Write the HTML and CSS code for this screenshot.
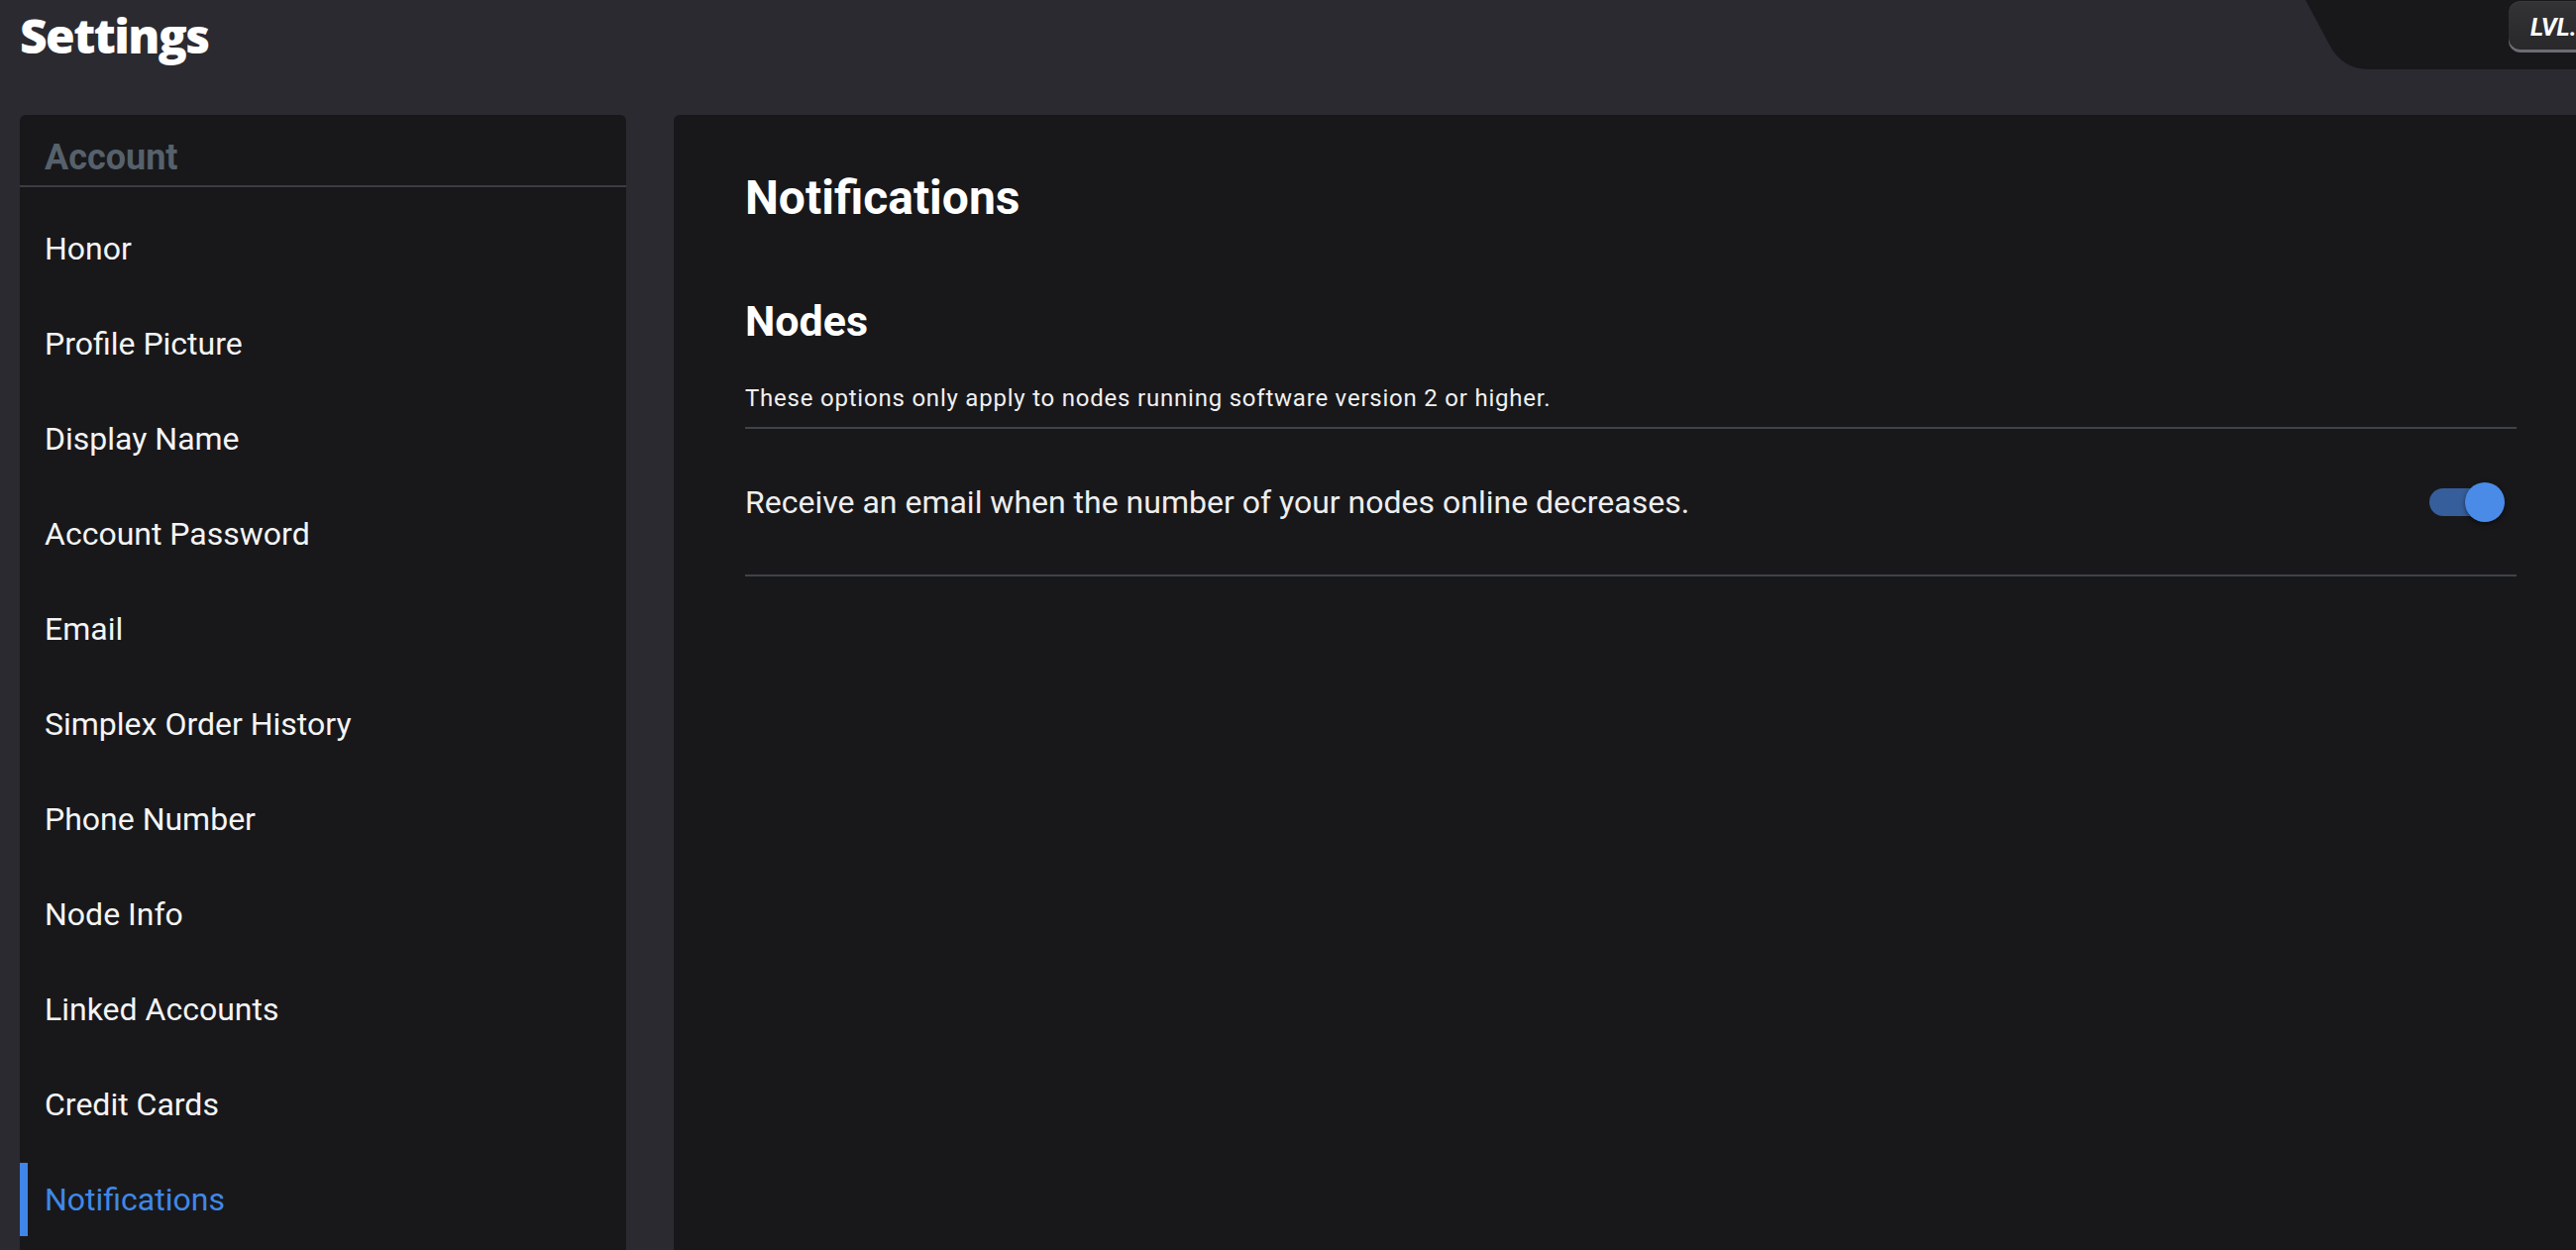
FILE: index.html
```html
<!DOCTYPE html>
<html lang="en">

<head>
    <meta charset="UTF-8">
    <meta name="viewport" content="width=device-width, initial-scale=1.0">
    <title>Settings</title>

    <link rel="stylesheet" href="styles.css">
</head>

<body>
    <header class="top">
        <h1 class="title">Settings</h1>
        <div class="topbar">
            <svg class="topbar-shape" viewBox="0 0 273 70" preserveAspectRatio="none">
                <path d="M0 0 L24 45 Q37 70 64 70 L273 70 L273 0 Z" fill="#18181b" />
            </svg>
            <button class="lvl">LVL.</button>
        </div>
    </header>

    <div class="content">
        <nav class="side">
            <h2 class="side-head">Account</h2>
            <ul class="side-list">
                <li class="side-item">Honor</li>
                <li class="side-item">Profile Picture</li>
                <li class="side-item">Display Name</li>
                <li class="side-item">Account Password</li>
                <li class="side-item">Email</li>
                <li class="side-item">Simplex Order History</li>
                <li class="side-item">Phone Number</li>
                <li class="side-item">Node Info</li>
                <li class="side-item">Linked Accounts</li>
                <li class="side-item">Credit Cards</li>
                <li class="side-item active">Notifications</li>
            </ul>
        </nav>

        <main class="panel">
            <h1 class="panel-title">Notifications</h1>
            <h2 class="panel-sub">Nodes</h2>
            <p class="panel-note">These options only apply to nodes running software version 2 or higher.</p>

            <div class="setting-row">
                <span class="setting-text">Receive an email when the number of your nodes online decreases.</span>
                <label class="switch">
                    <input type="checkbox" checked>
                    <span class="track"></span>
                    <span class="knob"></span>
                </label>
            </div>
        </main>
    </div>
</body>

</html>
```

FILE: styles.css
```css
* {
    box-sizing: border-box;
    margin: 0;
    padding: 0;
}

html,
body {
    overflow: hidden;
}

body {
    background: #2b2a30;
    color: #f2f2f2;
    font-family: Roboto, "Noto Sans", sans-serif;
    width: 2600px;
    height: 100vh;
}

/* top bar */
.top {
    display: flex;
    justify-content: space-between;
    align-items: flex-start;
    height: 116px;
}

.title {
    font-family: "Open Sans", "Noto Sans", sans-serif;
    font-weight: 800;
    font-size: 48px;
    line-height: 48px;
    color: #ffffff;
    padding: 12px 0 0 20px;
    letter-spacing: -1.6px;
}

.topbar {
    position: relative;
    display: flex;
    width: 273px;
    height: 70px;
    flex-shrink: 0;
}

.topbar-shape {
    position: absolute;
    top: 0;
    left: 0;
    width: 100%;
    height: 100%;
}

.lvl {
    position: relative;
    appearance: none;
    border: none;
    outline: none;
    margin: 1px 0 0 205px;
    width: 110px;
    height: 52px;
    flex-shrink: 0;
    padding: 0 0 0 22px;
    text-align: left;
    border-radius: 12px;
    background: linear-gradient(#333336, #28282b);
    box-shadow: inset 0 -3px 0 #6c6c74, inset 0 1px 0 #3a3a3e;
    color: #ffffff;
    font-family: Roboto, sans-serif;
    font-style: italic;
    font-weight: 700;
    font-size: 25px;
}

/* layout */
.content {
    display: flex;
    gap: 48px;
    padding: 0 20px;
    height: 1200px;
}

/* sidebar */
.side {
    width: 612px;
    flex-shrink: 0;
    background: #18181b;
    border-radius: 6px;
}

.side-head {
    font-size: 36px;
    line-height: 36px;
    font-weight: 700;
    color: #56616b;
    padding: 25px 25px 10px;
    border-bottom: 2px solid #3a3d44;
}

.side-list {
    list-style: none;
    display: flex;
    flex-direction: column;
    gap: 22px;
    padding-top: 25px;
}

.side-item {
    display: flex;
    align-items: center;
    height: 74px;
    padding-left: 25px;
    font-size: 32px;
    color: #f4f4f4;
    cursor: pointer;
}

.side-item.active {
    color: #4088e6;
    border-left: 8px solid #3f86e8;
    padding-left: 17px;
}

/* main panel */
.panel {
    width: 1932px;
    flex-shrink: 0;
    background: #18181b;
    border-radius: 6px;
    padding: 60px 72px 0;
}

.panel-title {
    font-size: 48px;
    line-height: 48px;
    font-weight: 700;
    color: #ffffff;
}

.panel-sub {
    font-size: 43px;
    line-height: 43px;
    font-weight: 700;
    color: #ffffff;
    margin-top: 79px;
}

.panel-note {
    font-size: 24px;
    line-height: 24px;
    color: #f0f0f0;
    letter-spacing: 0.78px;
    margin-top: 44px;
    padding-bottom: 17px;
    border-bottom: 2px solid #3e4349;
}

.setting-row {
    display: flex;
    justify-content: space-between;
    align-items: center;
    height: 149px;
    border-bottom: 2px solid #3e4349;
}

.setting-text {
    font-size: 32px;
    color: #eeeeee;
}

.switch {
    position: relative;
    width: 76px;
    height: 40px;
    margin-right: 12px;
    cursor: pointer;
}

.switch input {
    display: none;
}

.switch .track {
    position: absolute;
    left: 0;
    top: 6px;
    width: 64px;
    height: 28px;
    border-radius: 14px;
    background: #365e9b;
}

.switch .knob {
    position: absolute;
    right: 0;
    top: 0;
    width: 40px;
    height: 40px;
    border-radius: 50%;
    background: #4a8be8;
    box-shadow: 0 2px 5px rgba(0, 0, 0, 0.5);
}
```
